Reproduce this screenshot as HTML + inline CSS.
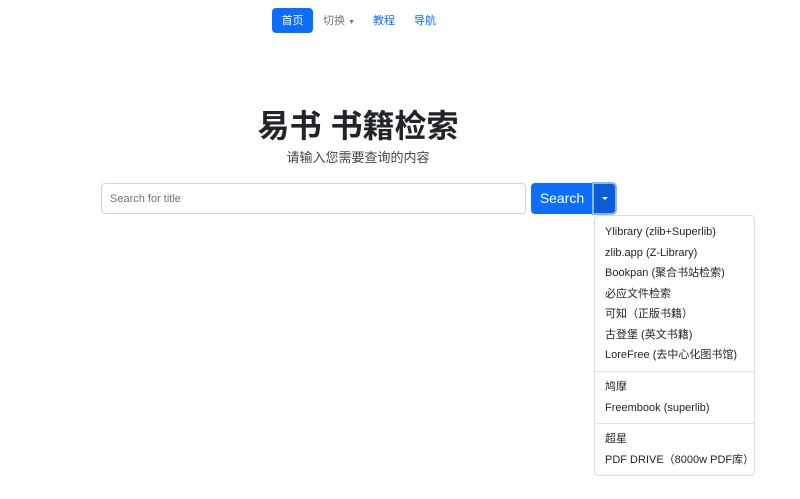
<!DOCTYPE html>
<html><head><meta charset="utf-8"><style>
*{box-sizing:border-box;margin:0;padding:0}
body{width:800px;height:499px;background:#fff;font-family:"Liberation Sans","Noto Sans CJK SC",sans-serif;color:#212529;position:relative;overflow:hidden}
.nav a{position:absolute;top:8px;height:25px;line-height:26px;font-size:11px;color:#0d6efd;text-decoration:none}
.nav .act{left:272px;width:41px;background:#0d6efd;color:#fff;border-radius:4px;text-align:center}
h1{position:absolute;top:104px;left:0;width:716px;text-align:center;font-size:32px;font-weight:bold;line-height:44px}
.sub{position:absolute;top:149px;left:0;width:716px;text-align:center;font-size:13px;color:#444;line-height:18px}
.inp{position:absolute;left:101px;top:183px;width:425px;height:31px;border:1px solid #ced4da;border-radius:4px;font-size:11px;color:#6c757d;padding-left:8px;line-height:30px}
.btn{position:absolute;left:531px;top:183px;width:62px;height:31px;background:#0d6efd;color:#fff;font-size:14px;line-height:31px;text-align:center;border-radius:4px 0 0 4px}
.tog{position:absolute;left:592px;top:182px;width:25px;height:33px;background:#0b5ed7;border:2px solid #86b7fe;border-radius:0 5px 5px 0}
.tog:after{content:"";position:absolute;left:8px;top:13px;border-left:3px solid transparent;border-right:3px solid transparent;border-top:3px solid #fff}
.dd{position:absolute;left:594px;top:215px;width:161px;height:261px;border:1px solid #dcdcdc;border-radius:4px;background:#fff}
.dd div{position:absolute;left:10px;font-size:11px;line-height:14px;white-space:nowrap;color:#212529}
.dd hr{position:absolute;left:0;width:159px;border:0;border-top:1px solid #dee2e6}
</style></head><body>
<div class="nav">
<a class="act">首页</a>
<a style="left:323px;color:#6c757d">切换 <span style="font-size:7px">▼</span></a>
<a style="left:373px">教程</a>
<a style="left:414px">导航</a>
</div>
<h1>易书 书籍检索</h1>
<div class="sub">请输入您需要查询的内容</div>
<div class="inp">Search for title</div>
<div class="btn">Search</div>
<div class="tog"></div>
<div class="dd">
<div style="top:9px">Ylibrary (zlib+Superlib)</div>
<div style="top:30px">zlib.app (Z-Library)</div>
<div style="top:50px">Bookpan (聚合书站检索)</div>
<div style="top:71px">必应文件检索</div>
<div style="top:91px">可知（正版书籍）</div>
<div style="top:112px">古登堡 (英文书籍)</div>
<div style="top:132px">LoreFree (去中心化图书馆)</div>
<hr style="top:155px">
<div style="top:164px">鸠摩</div>
<div style="top:185px">Freembook (superlib)</div>
<hr style="top:207px">
<div style="top:216px">超星</div>
<div style="top:237px">PDF DRIVE（8000w PDF库）</div>
</div>
</body></html>
